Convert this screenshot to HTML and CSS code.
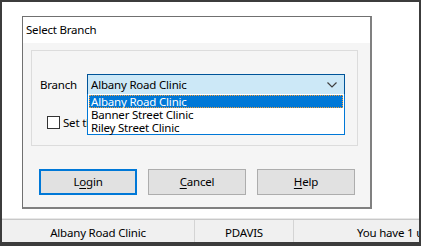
FILE: index.html
```html
<!DOCTYPE html>
<html>
<head>
<meta charset="utf-8">
<link rel="stylesheet" href="styles.css">
</head>
<body>
<div class="screen">
  <div class="desk">
    <div class="dialog">
      <div class="title">Select Branch</div>
      <div class="body">
        <div class="group">
          <div class="row">
            <span class="label">Branch</span>
            <div class="combo-wrap">
              <div class="combo">
                <span class="combo-text">Albany Road Clinic</span>
                <svg class="chev" width="10" height="6" viewBox="0 0 10 6"><path d="M0.5 0.5 L5 5 L9.5 0.5" fill="none" stroke="#404040" stroke-width="1.2"/></svg>
              </div>
              <ul class="list">
                <li class="item sel">Albany Road Clinic</li>
                <li class="item">Banner Street Clinic</li>
                <li class="item">Riley Street Clinic</li>
              </ul>
            </div>
          </div>
          <div class="check-row">
            <span class="box"></span>
            <span class="check-label">Set this as my default branch</span>
          </div>
        </div>
        <div class="buttons">
          <div class="btn default">L<u>o</u>gin</div>
          <div class="btn"><u>C</u>ancel</div>
          <div class="btn"><u>H</u>elp</div>
        </div>
      </div>
    </div>
  </div>
  <div class="status">
    <div class="panel p1">Albany Road Clinic</div>
    <div class="panel p2">PDAVIS</div>
    <div class="panel p3">You have 1 unread message</div>
  </div>
</div>
</body>
</html>
```

FILE: styles.css
```css
html, body {
  margin: 0;
  padding: 0;
}
body {
  font-family: "Noto Sans", "Open Sans", sans-serif;
  font-size: 11.5px;
  letter-spacing: -0.2px;
  color: #000;
  background: #fff;
}
.screen {
  width: 421px;
  height: 246px;
  box-sizing: border-box;
  border-style: solid;
  border-color: #3c3c3c;
  border-width: 2px 2px 4px 2px;
  background: #fff;
  display: flex;
  flex-direction: column;
  overflow: hidden;
}
.desk {
  flex: 1;
  padding: 14px 0 0 20px;
}
.dialog {
  width: 350px;
  height: 193px;
  box-sizing: border-box;
  border: 1px solid #707070;
  border-right: 2px solid #808080;
  border-bottom: 2px solid #808080;
  display: flex;
  flex-direction: column;
}
.title {
  height: 26px;
  line-height: 26px;
  padding-left: 3px;
  background: #fff;
  white-space: nowrap;
}
.body {
  flex: 1;
  background: #f5f5f5;
  padding: 7px 12px 0 8px;
}
.group {
  height: 96px;
  box-sizing: border-box;
  border: 1px solid #dcdcdc;
  padding: 23px 0 0 8px;
}
.row {
  display: flex;
  align-items: center;
  height: 21px;
}
.label {
  width: 47px;
  line-height: 21px;
}
.combo-wrap {
  position: relative;
  width: 258px;
}
.combo {
  height: 21px;
  box-sizing: border-box;
  border: 1px solid #005499;
  background: #cce8f7;
  display: flex;
  align-items: center;
  padding: 0 0 0 3px;
}
.combo-text {
  flex: 1;
  line-height: 19px;
  white-space: nowrap;
}
.chev {
  margin-right: 7px;
  margin-top: 1px;
}
.list {
  position: absolute;
  left: 0;
  top: 20px;
  width: 258px;
  box-sizing: border-box;
  margin: 0;
  padding: 1px 1px 0 1px;
  list-style: none;
  border: 1px solid #0078d7;
  border-top: none;
  background: #fff;
}
.item {
  height: 13px;
  line-height: 13px;
  padding-left: 2px;
  white-space: nowrap;
}
.item.sel {
  background: #0078d7;
  color: #fff;
  outline: 1px dotted #f0a040;
  outline-offset: -1px;
}
.check-row {
  display: flex;
  align-items: center;
  margin-top: 21px;
  padding-left: 7px;
  height: 13px;
}
.box {
  width: 13px;
  height: 13px;
  box-sizing: border-box;
  border: 1px solid #333;
  background: #fff;
  margin-right: 3px;
}
.check-label {
  white-space: nowrap;
  line-height: 13px;
}
.buttons {
  display: flex;
  gap: 11px;
  margin-top: 23px;
  padding-left: 8px;
}
.btn {
  width: 98px;
  height: 26px;
  box-sizing: border-box;
  border: 1px solid #adadad;
  background: #e1e1e1;
  display: flex;
  align-items: center;
  justify-content: center;
  line-height: 24px;
}
.btn.default {
  border: 2px solid #0078d7;
}
.btn u {
  text-decoration-thickness: 1px;
  text-underline-offset: 2px;
}
.status {
  height: 22px;
  border-top: 1px solid #c8c8c8;
  box-shadow: 0 -1px 0 #e8e8e8;
  background: #f0f0f0;
  display: flex;
}
.panel {
  line-height: 22px;
  padding-top: 2px;
  box-sizing: border-box;
  text-align: center;
  white-space: nowrap;
  overflow: hidden;
  border-right: 1px solid #d4d4d4;
}
.p1 { width: 193px; }
.p2 { width: 99px; }
.p3 {
  flex: 1;
  text-align: left;
  padding-left: 63px;
  border-right: none;
}
```
